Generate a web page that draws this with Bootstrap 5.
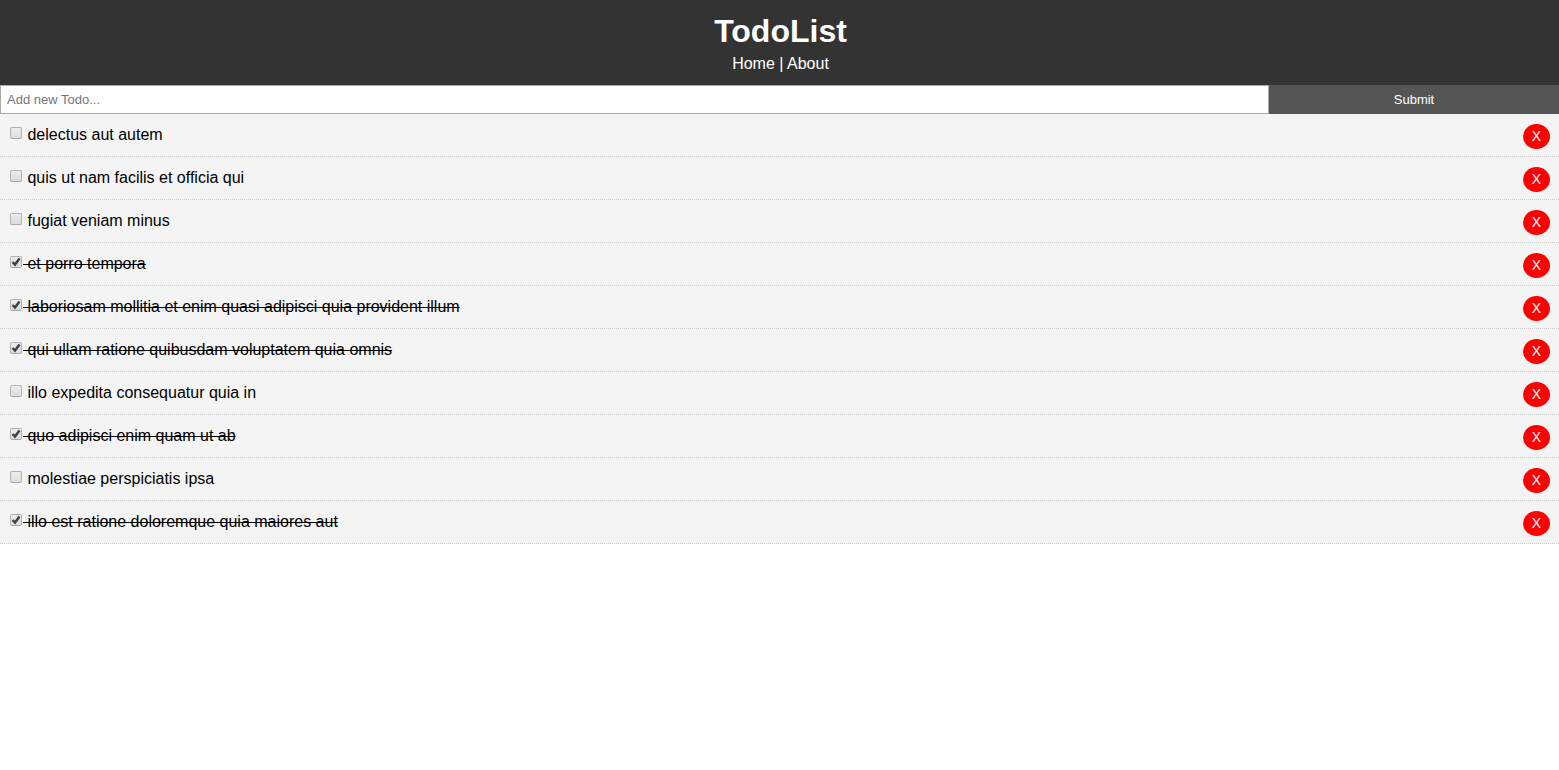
<!DOCTYPE html>
<html lang="en">
<head>
<meta charset="utf-8">
<meta name="viewport" content="width=device-width, initial-scale=1">
<title>TodoList</title>
<link href="https://cdn.jsdelivr.net/npm/bootstrap@5.3.0/dist/css/bootstrap.min.css" rel="stylesheet">
<style>
body { font-family: "Liberation Sans", Arial, sans-serif; font-size: 16px; line-height: 22px; color: #000; background: #fff; }
.app-header { background: #333; padding: 10px 9px 10px 11px; }
.app-header h1 { font-size: 32px; line-height: 43px; font-weight: 700; }
.add-input { flex: 1 1 0; min-width: 0; height: 29px; padding: 5px 6px; border: 1px solid #a9a9a9; border-radius: 0; font-size: 13px; line-height: 17px; color: #000; }
.add-input::placeholder { color: #757575; opacity: 1; }
.add-submit { flex: 0 0 290px; border: 0; border-radius: 0; background: #555; color: #fff; font-size: 13px; line-height: 17px; padding: 5px 20px; }
.todo-item { background: #f4f4f4; border-bottom: 1px dotted #ccc; padding: 10px 9px 7px 10px; }
.todo-check { appearance: none; width: 12px; height: 12px; margin: 3px 1px 0 0; border: 1px solid #b2b2b2; border-bottom-color: #a6a6a6; border-radius: 2px; background: linear-gradient(#ededed, #dcdcdc); }
.todo-check:checked { background: url("data:image/svg+xml,%3Csvg xmlns='http://www.w3.org/2000/svg' viewBox='0 0 10 10'%3E%3Cpath d='M1.6 5L4 7.5L8.5 1.6' fill='none' stroke='%23404040' stroke-width='2.5'/%3E%3C/svg%3E") center / 10px 10px no-repeat, linear-gradient(#ededed, #dcdcdc); }
.todo-label { white-space: pre; line-height: 22px; }
.done .todo-label { text-decoration: line-through; }
.remove-btn { background: #f00; color: #fff; border: 0; border-radius: 50%; width: 27px; height: 25px; padding: 0; font-size: 14px; line-height: 25px; }
</style>
</head>
<body>
<header class="app-header text-center text-white">
  <h1 class="m-0">TodoList</h1>
  <nav><a class="text-white text-decoration-none" href="#home">Home</a> | <a class="text-white text-decoration-none" href="#about">About</a></nav>
</header>
<main>
  <form class="d-flex">
    <input class="add-input" type="text" placeholder="Add new Todo..." aria-label="Add new Todo">
    <button class="add-submit" type="button">Submit</button>
  </form>
  <ul class="list-unstyled m-0" id="todos"></ul>
</main>
<script src="https://cdn.jsdelivr.net/npm/bootstrap@5.3.0/dist/js/bootstrap.bundle.min.js"></script>
<script>
const todos = [
  ["delectus aut autem", false],
  ["quis ut nam facilis et officia qui", false],
  ["fugiat veniam minus", false],
  ["et porro tempora", true],
  ["laboriosam mollitia et enim quasi adipisci quia provident illum", true],
  ["qui ullam ratione quibusdam voluptatem quia omnis", true],
  ["illo expedita consequatur quia in", false],
  ["quo adipisci enim quam ut ab", true],
  ["molestiae perspiciatis ipsa", false],
  ["illo est ratione doloremque quia maiores aut", true]
];
document.getElementById("todos").innerHTML = todos.map(([title, done], i) => `
  <li class="todo-item d-flex align-items-start${done ? " done" : ""}">
    <input class="todo-check flex-shrink-0" type="checkbox" id="todo${i}"${done ? " checked" : ""}>
    <label class="todo-label me-auto" for="todo${i}"> ${title}</label>
    <button class="remove-btn flex-shrink-0" type="button" aria-label="Remove ${title}">X</button>
  </li>`).join("");
</script>
</body>
</html>
